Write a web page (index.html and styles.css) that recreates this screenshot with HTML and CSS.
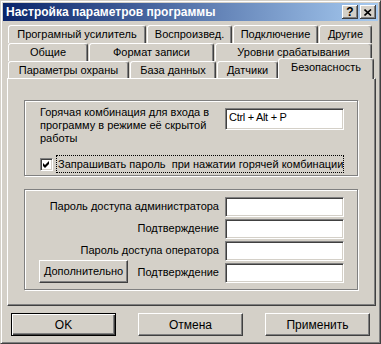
FILE: index.html
```html
<!DOCTYPE html>
<html lang="ru">
<head>
<meta charset="utf-8">
<title>Настройка параметров программы</title>
<link rel="stylesheet" href="styles.css">
</head>
<body>
<div class="window">
  <div class="titlebar">
    <span class="title">Настройка параметров программы</span>
    <div class="tb-buttons">
      <span class="tb-btn tb-help">?</span>
      <span class="tb-btn"><svg width="8" height="7" viewBox="0 0 8 7"><path d="M0.5 0.5 L7 6.5 M7 0.5 L0.5 6.5" stroke="#000" stroke-width="1.6" fill="none"/></svg></span>
    </div>
  </div>
  <div class="client">
    <div class="tabs">
      <div class="tab-row">
        <div class="tab t-amp">Програмный усилитель</div>
        <div class="tab t-play">Воспроизвед.</div>
        <div class="tab t-conn">Подключение</div>
        <div class="tab t-other">Другие</div>
      </div>
      <div class="tab-row">
        <div class="tab t-gen">Общие</div>
        <div class="tab t-fmt">Формат записи</div>
        <div class="tab t-lvl">Уровни срабатывания</div>
      </div>
      <div class="tab-row front">
        <div class="tab t-guard">Параметры охраны</div>
        <div class="tab t-db">База данных</div>
        <div class="tab t-sens">Датчики</div>
        <div class="tab active">Безопасность</div>
      </div>
    </div>
    <div class="panel">
      <div class="group g1">
        <div class="hot-row">
          <div class="hot-label">Горячая комбинация для входа в<br>программу в режиме её скрытой<br>работы</div>
          <input class="field hot-field" type="text" value="Ctrl + Alt + P">
        </div>
        <div class="check-row">
          <span class="checkbox"><svg width="9" height="9" viewBox="0 0 9 9"><path d="M1 3 L3 5 L7 1 L7 4 L3 8 L1 6 Z" fill="#000"/></svg></span>
          <span class="focus-label">Запрашивать пароль&nbsp; при нажатии горячей комбинации</span>
        </div>
      </div>
      <div class="group g2">
        <div class="pw-row">
          <span class="pw-label">Пароль доступа администратора</span>
          <input class="field" type="password">
        </div>
        <div class="pw-row">
          <span class="pw-label">Подтверждение</span>
          <input class="field" type="password">
        </div>
        <div class="pw-row">
          <span class="pw-label">Пароль доступа оператора</span>
          <input class="field" type="password">
        </div>
        <div class="pw-row">
          <button class="btn btn-more">Дополнительно</button>
          <span class="pw-label pw-label-rest">Подтверждение</span>
          <input class="field" type="password">
        </div>
      </div>
    </div>
    <div class="actions">
      <button class="btn btn-main default">OK</button>
      <button class="btn btn-main">Отмена</button>
      <button class="btn btn-main">Применить</button>
    </div>
  </div>
</div>
</body>
</html>
```
FILE: styles.css
```css
* { box-sizing: border-box; }
html, body { margin: 0; padding: 0; }
body {
  width: 381px;
  height: 344px;
  overflow: hidden;
  background: #d4d0c8;
  font-family: "Liberation Sans", Arial, sans-serif;
  font-size: 11px;
  color: #000;
}
.window {
  width: 381px;
  height: 344px;
  background: #d4d0c8;
  border: 1px solid;
  border-color: #d4d0c8 #404040 #404040 #d4d0c8;
  box-shadow: inset 1px 1px 0 #fff, inset -1px -1px 0 #808080;
  padding: 2px;
  display: flex;
  flex-direction: column;
}
.titlebar {
  height: 18px;
  flex: none;
  display: flex;
  align-items: center;
  padding: 0 2px 0 3px;
  background: linear-gradient(to right, #0a246a, #a6caf0);
}
.title {
  flex: 1;
  color: #fff;
  font-weight: bold;
  font-size: 12px;
  line-height: 18px;
  white-space: nowrap;
}
.tb-buttons { display: flex; gap: 2px; }
.tb-btn {
  width: 16px;
  height: 14px;
  background: #d4d0c8;
  box-shadow: inset -1px -1px 0 #404040, inset 1px 1px 0 #fff, inset -2px -2px 0 #808080;
  display: flex;
  align-items: center;
  justify-content: center;
}
.tb-help { font-weight: bold; font-size: 12px; line-height: 14px; }
.client {
  flex: 1;
  display: flex;
  flex-direction: column;
  padding: 4px 2px 0 4px;
}
.tab-row {
  display: flex;
  gap: 1px;
  height: 18px;
  margin-left: 1px;
  align-items: flex-start;
}
.tab {
  height: 18px;
  background: #d4d0c8;
  border: 1px solid;
  border-bottom: none;
  border-color: #fff #404040 transparent #fff;
  border-radius: 3px 3px 0 0;
  box-shadow: inset -1px 0 0 #808080;
  text-align: center;
  line-height: 16px;
  white-space: nowrap;
}
.front { height: 17px; }
.front .tab { height: 17px; }
.t-amp { width: 138px; }
.t-play { width: 85px; }
.t-conn { width: 85px; }
.t-other { width: 53px; }
.t-gen { width: 80px; }
.t-fmt { width: 125px; }
.t-lvl { width: 157px; }
.t-guard { width: 121px; }
.t-db { width: 86px; }
.t-sens { width: 61px; }
.front .active {
  width: 96px;
  height: 21px;
  margin-top: -3px;
  margin-left: -1px;
  position: relative;
  z-index: 1;
  line-height: 17px;
}
.panel {
  width: 369px;
  height: 228px;
  flex: none;
  border: 1px solid;
  border-color: #fff #404040 #404040 #fff;
  box-shadow: inset -1px -1px 0 #808080;
  padding: 21px 0 0 16px;
}
.group {
  width: 334px;
  border: 1px solid #808080;
  box-shadow: 1px 1px 0 #fff, inset 1px 1px 0 #fff;
}
.g1 {
  height: 76px;
  padding: 5px 0 0 15px;
}
.hot-row { display: flex; }
.hot-label {
  width: 185px;
  line-height: 13px;
  white-space: nowrap;
}
.field {
  width: 119px;
  height: 20px;
  margin: 0;
  background: #fff;
  border: 1px solid;
  border-color: #808080 #fff #fff #808080;
  box-shadow: inset 1px 1px 0 #404040, inset -1px -1px 0 #d4d0c8;
  font-family: "Liberation Sans", Arial, sans-serif;
  font-size: 11px;
  color: #000;
  padding: 0 2px;
  outline: none;
  flex: none;
}
.hot-field {
  height: 22px;
  margin-top: 2px;
  padding: 0 0 4px 3px;
  letter-spacing: -0.3px;
}
.check-row {
  display: flex;
  align-items: center;
  height: 18px;
  margin-top: 10px;
}
.checkbox {
  width: 13px;
  height: 13px;
  background: #fff;
  border: 1px solid;
  border-color: #808080 #fff #fff #808080;
  box-shadow: inset 1px 1px 0 #404040, inset -1px -1px 0 #d4d0c8;
  display: flex;
  align-items: center;
  justify-content: center;
  flex: none;
}
.focus-label {
  margin-left: 3px;
  width: 288px;
  height: 18px;
  line-height: 16px;
  border: 1px dotted #000;
  padding-left: 1px;
  white-space: nowrap;
  overflow: hidden;
}
.g2 {
  height: 101px;
  margin-top: 13px;
  padding: 7px 0 0 0;
  display: flex;
  flex-direction: column;
  gap: 2px;
}
.pw-row {
  display: flex;
  align-items: center;
  height: 20px;
  gap: 6px;
}
.pw-label {
  width: 194px;
  flex: none;
  text-align: right;
  white-space: nowrap;
  line-height: 16px;
  padding-bottom: 3px;
}
.pw-label-rest { width: 85px; }
.btn {
  background: #d4d0c8;
  border: 1px solid;
  border-color: #fff #404040 #404040 #fff;
  box-shadow: inset -1px -1px 0 #808080;
  font-family: "Liberation Sans", Arial, sans-serif;
  font-size: 11px;
  color: #000;
  padding: 0;
  margin: 0;
}
.btn-more {
  width: 89px;
  height: 23px;
  margin-left: 14px;
  margin-top: -4px;
  flex: none;
}
.actions {
  display: flex;
  gap: 22px;
  margin-top: 7px;
  padding-left: 4px;
}
.btn-main {
  width: 105px;
  height: 23px;
  font-size: 12px;
}
.default {
  border: 1px solid #000;
  box-shadow: inset 1px 1px 0 #fff, inset -1px -1px 0 #404040, inset -2px -2px 0 #808080;
}
```
